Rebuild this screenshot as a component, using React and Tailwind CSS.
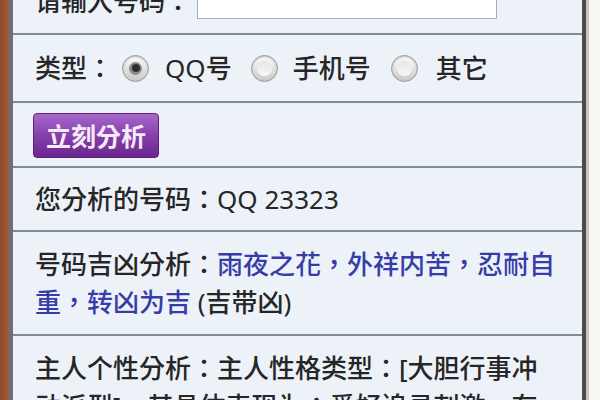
import React from 'react';

const font = { fontFamily: '"Noto Sans", "Noto Sans CJK TC", sans-serif' };

function Radio({ checked }) {
  return (
    <span className="flex h-[27px] w-[27px] items-center justify-center rounded-full border border-[#9a9a9a] bg-gradient-to-b from-[#fdfdfd] to-[#c9c9c9] shadow-[inset_0_1px_2px_rgba(0,0,0,0.25)]">
      {checked ? (
        <span className="flex h-[13px] w-[13px] items-center justify-center rounded-full bg-[#8a8a8a]">
          <span className="h-[8px] w-[8px] rounded-full bg-[#2e2e2e]" />
        </span>
      ) : (
        <span className="h-[15px] w-[15px] rounded-full bg-gradient-to-b from-[#e6e6e6] to-[#f7f7f7]" />
      )}
    </span>
  );
}

function Row({ children, className = '' }) {
  return (
    <div className={`border-b-2 border-[#7f8d9b] bg-[#edf2f9] pl-[22px] pr-[23px] ${className}`}>
      {children}
    </div>
  );
}

export default function App() {
  return (
    <div className="flex h-[400px] w-[600px] overflow-hidden bg-[#f7f5ef]" style={font}>
      {/* left frame */}
      <div className="w-[9px] bg-gradient-to-r from-[#8a4a2c] to-[#a45d37]" />
      <div className="w-[4px] bg-[#6c7075]" />

      <div className="flex-1 overflow-hidden">
        <div className="-mt-[31px] text-[26px] font-medium leading-[38px] text-[#262626]">
          {/* phone input */}
          <Row className="py-[13px]">
            <div className="flex items-center">
              <span>请输入号码：</span>
              <div className="ml-[6px] h-[36px] w-[300px] border border-[#a7aeb5] bg-white" />
            </div>
          </Row>

          {/* type radios */}
          <Row className="py-[14px]">
            <div className="flex items-center">
              <span>类型：</span>
              <span className="ml-[9px]"><Radio checked /></span>
              <span className="ml-[16px]"><span className="font-normal">QQ</span>号</span>
              <span className="ml-[19px]"><Radio /></span>
              <span className="ml-[15px]">手机号</span>
              <span className="ml-[20px]"><Radio /></span>
              <span className="ml-[18px]">其它</span>
            </div>
          </Row>

          {/* analyse button */}
          <Row className="pt-[10px] pb-[8px]">
            <button className="ml-[-2px] flex h-[45px] items-center rounded-[4px] border border-[#5b1f7c] bg-gradient-to-b from-[#a868cb] via-[#8540aa] to-[#6b258f] px-[12px] text-[25px] font-bold text-[#f6e9f8]">
              立刻分析
            </button>
          </Row>

          <Row className="py-[12px]">
            <p>您分析的号码：<span className="font-normal">QQ 23323</span></p>
          </Row>

          <Row className="py-[13px]">
            <p>
              号码吉凶分析：
              <span className="text-[#373ca8]">雨夜之花，外祥内苦，忍耐自重，转凶为吉</span>
              <span className="font-normal"> (</span>吉带凶<span className="font-normal">)</span>
            </p>
          </Row>

          <Row className="py-[13px]">
            <p>
              主人个性分析：主人性格类型：[大胆行事冲动派型]，其具体表现为：爱好追寻刺激，有冒险精神，行动力强，不喜欢拘束。
            </p>
          </Row>
        </div>
      </div>

      {/* right frame */}
      <div className="w-[4px] bg-[#4b4b4b]" />
      <div className="w-[3px] bg-[#c9c6bf]" />
      <div className="w-[11px] bg-[#f8f6f0]" />
    </div>
  );
}
